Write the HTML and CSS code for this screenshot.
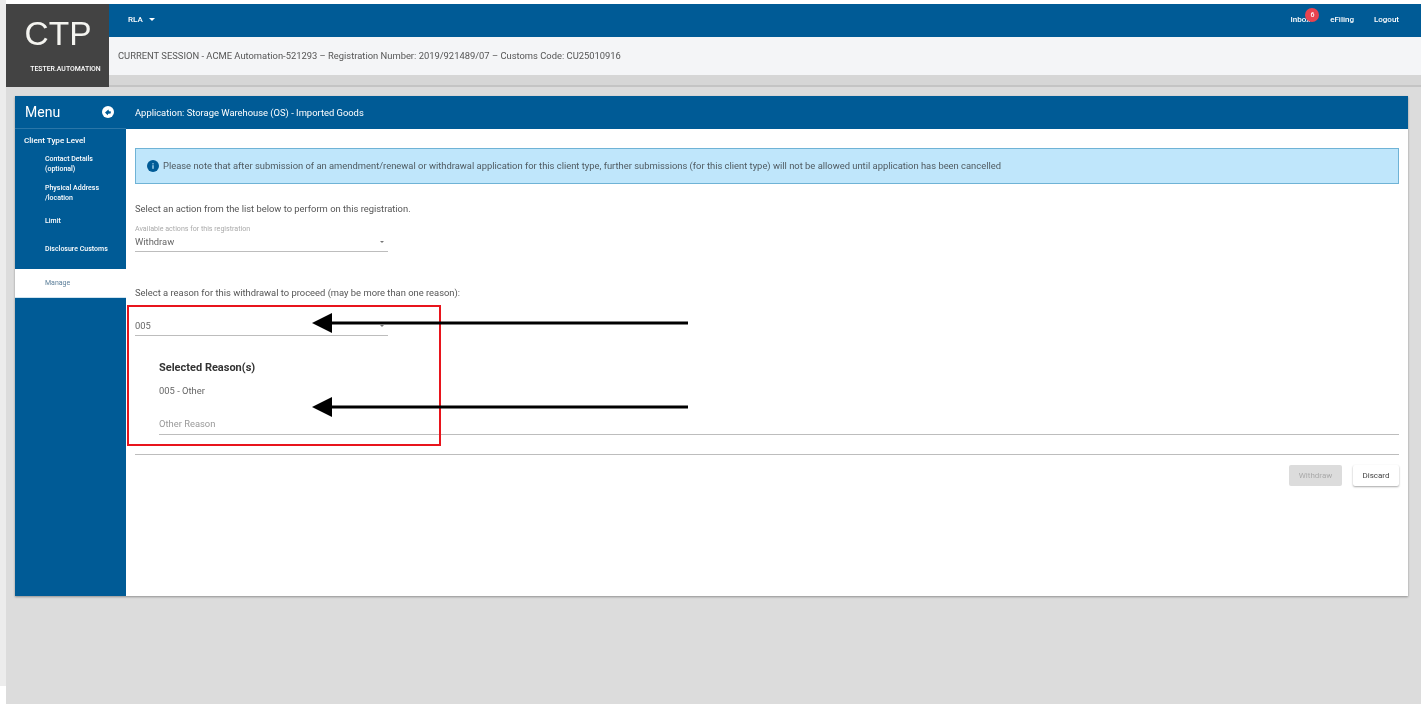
FILE: index.html
```html
<!DOCTYPE html>
<html lang="en">
<head>
<meta charset="utf-8">
<title>CTP</title>
<link rel="stylesheet" href="styles.css">
</head>
<body>
<div class="app">
  <header class="header">
    <div class="logo">
      <div class="logo-title">CTP</div>
      <div class="logo-user">TESTER.AUTOMATION</div>
    </div>
    <div class="header-main">
      <div class="topbar">
        <div class="user">RLA <span class="caret"></span></div>
        <nav class="topnav">
          <a class="inbox">Inbox<span class="badge">6</span></a>
          <a>eFiling</a>
          <a>Logout</a>
        </nav>
      </div>
      <div class="session">CURRENT SESSION - ACME Automation-521293 – Registration Number: 2019/921489/07 – Customs Code: CU25010916</div>
      <div class="session-foot"></div>
    </div>
  </header>
  <main class="card">
    <aside class="sidebar">
      <div class="menu-head">
        <span class="menu-title">Menu</span>
        <svg class="menu-icon" viewBox="0 0 12 12" width="12" height="12"><circle cx="6" cy="6" r="6" fill="#fff"/><path d="M3 6.6 6.4 3.4l.6 1.8 2 .2-.4 2.2-2.4.2-.6 1.4z" fill="#005b96"/></svg>
      </div>
      <div class="menu-level">Client Type Level</div>
      <ul class="menu-list">
        <li class="item-contact">Contact Details<br>(optional)</li>
        <li class="item-address">Physical Address<br>/location</li>
        <li class="item-limit">Limit</li>
        <li class="item-disclosure">Disclosure Customs</li>
        <li class="item-manage">Manage</li>
      </ul>
    </aside>
    <section class="content">
      <div class="content-head">Application: Storage Warehouse (OS) - Imported Goods</div>
      <div class="content-body">
        <div class="notice">
          <svg class="notice-icon" viewBox="0 0 12 12" width="12" height="12"><circle cx="6" cy="6" r="6" fill="#005b96"/><rect x="5.4" y="5.2" width="1.2" height="3.6" fill="#bfe6fb"/><rect x="5.4" y="3.2" width="1.2" height="1.2" fill="#bfe6fb"/></svg>
          <span>Please note that after submission of an amendment/renewal or withdrawal application for this client type, further submissions (for this client type) will not be allowed until application has been cancelled</span>
        </div>
        <p class="prompt prompt-action">Select an action from the list below to perform on this registration.</p>
        <div class="select select-action">
          <div class="select-label">Available actions for this registration</div>
          <div class="select-value">Withdraw<span class="select-caret"></span></div>
        </div>
        <p class="prompt prompt-reason">Select a reason for this withdrawal to proceed (may be more than one reason):</p>
        <div class="select select-reason">
          <div class="select-value">005<span class="select-caret"></span></div>
        </div>
        <div class="reasons">
          <h3>Selected Reason(s)</h3>
          <div class="reason-item">005 - Other</div>
          <div class="reason-input">Other Reason</div>
        </div>
        <hr class="divider">
        <div class="actions">
          <button class="btn btn-disabled" type="button">Withdraw</button>
          <button class="btn btn-plain" type="button">Discard</button>
        </div>
      </div>
    </section>
  </main>
  <div class="annot-box"></div>
  <svg class="annot-arrow arrow-one" viewBox="0 0 376 20" width="376" height="20"><path d="M20 8.5H376v3H20z" fill="#000"/><path d="M0 10 20 0v20z" fill="#000"/></svg>
  <svg class="annot-arrow arrow-two" viewBox="0 0 376 20" width="376" height="20"><path d="M20 8.5H376v3H20z" fill="#000"/><path d="M0 10 20 0v20z" fill="#000"/></svg>
</div>
</body>
</html>
```

FILE: styles.css
```css
* { box-sizing: border-box; }
html, body { margin: 0; height: 100%; }
body {
  background: #fff;
  padding: 4px 0 4px 6px;
  overflow: hidden;
  font-family: Roboto, "Liberation Sans", sans-serif;
  color: #555;
  position: relative;
}
body::before {
  content: "";
  position: absolute;
  left: 0; top: 0;
  width: 6px; height: 686px;
  background: #ececec;
}
.app {
  position: relative;
  height: 700px;
  background: #dcdcdc;
  filter: blur(0.7px);
}
.header { display: flex; height: 83px; }
.logo {
  width: 103px;
  background: #434343;
  color: #fff;
  text-align: center;
  padding-top: 10px;
}
.logo-title { font-family: "Liberation Sans", sans-serif; font-size: 33.5px; line-height: 40px; color: #f4f4f0; padding-left: 1px; }
.logo-user { font-size: 6.9px; font-weight: 500; margin-top: 11px; line-height: 8px; padding-left: 16px; white-space: nowrap; }
.header-main { flex: 1; display: flex; flex-direction: column; }
.topbar {
  height: 33px;
  background: #005b96;
  color: #fff;
  display: flex;
  align-items: center;
  justify-content: space-between;
  padding: 0 22px 2px 19px;
  font-size: 8px;
  font-weight: 500;
}
.caret {
  display: inline-block;
  margin-left: 4px;
  vertical-align: middle;
  border: 3px solid transparent;
  border-top-color: #fff;
  border-bottom-width: 0;
}
.topnav { display: flex; gap: 20px; }
.inbox { position: relative; }
.badge {
  position: absolute;
  left: 15px; top: -7px;
  width: 14px; height: 14px;
  border-radius: 50%;
  background: #e9434f;
  color: #fff;
  font-size: 7px;
  line-height: 14px;
  text-align: center;
}
.session {
  height: 38px;
  background: #f4f5f7;
  display: flex;
  align-items: center;
  padding: 0 0 2px 9px;
  font-size: 9.4px;
  color: #555;
}
.session-foot { flex: 1; background: #d6d6d6; border-bottom: 2px solid #c4c4c4; }
.card {
  display: flex;
  height: 500px;
  margin: 9px 13px 0 9px;
  background: #fff;
  box-shadow: 0 1px 2px rgba(0,0,0,.35);
}
.sidebar { width: 111px; background: #005b96; color: #fff; display: flex; flex-direction: column; }
.menu-head {
  height: 33px;
  display: flex;
  align-items: center;
  justify-content: space-between;
  padding: 0 12px 0 10px;
  border-bottom: 1px solid #2a76a8;
}
.menu-title { font-size: 14px; }
.menu-level { font-size: 8.1px; font-weight: 500; padding: 6px 0 0 9px; line-height: 11px; }
.menu-list { list-style: none; margin: 0; padding: 0; font-size: 7px; font-weight: 500; line-height: 9.6px; flex: 1; }
.menu-list li { padding-left: 30px; }
.item-contact { margin-top: 9px; }
.item-address { margin-top: 10px; }
.item-limit { margin-top: 14px; }
.item-disclosure { margin-top: 18px; }
.menu-list .item-manage {
  margin-top: 14px;
  height: 29px;
  padding-top: 2px;
  background: #fff;
  color: #5c7f9a;
  font-weight: 400;
  display: flex;
  align-items: center;
  border-bottom: 1px solid #cfe3ef;
}
.content { flex: 1; display: flex; flex-direction: column; min-width: 0; }
.content-head {
  height: 33px;
  background: #005b96;
  color: #fff;
  display: flex;
  align-items: center;
  padding-left: 9px;
  font-size: 9.4px;
}
.content-body { padding: 19px 9px 0 9px; }
.notice {
  height: 36px;
  background: #bfe6fb;
  border: 1px solid #6fb3d6;
  display: flex;
  align-items: center;
  gap: 4px;
  padding: 0 0 1px 11px;
  font-size: 9.4px;
  color: #4f5a60;
}
.prompt { margin: 0; font-size: 9.4px; line-height: 12px; color: #555; }
.prompt-action { margin-top: 19px; }
.select { width: 253px; border-bottom: 1px solid #bdbdbd; }
.select-action { margin-top: 10px; height: 27px; }
.select-label { font-size: 7.1px; line-height: 8px; color: #aaa; }
.select-value { position: relative; font-size: 9.4px; line-height: 11px; color: #666; margin-top: 3px; }
.select-caret {
  position: absolute;
  right: 4px; top: 5px;
  border: 2.5px solid transparent;
  border-top-color: #777;
  border-bottom-width: 0;
}
.prompt-reason { margin-top: 35px; }
.select-reason { margin-top: 21px; height: 16px; }
.select-reason .select-value { margin-top: 0; }
.reasons { padding-left: 24px; }
.reasons h3 { margin: 25px 0 0; font-size: 11px; line-height: 13px; font-weight: 700; color: #333; }
.reason-item { margin-top: 11px; font-size: 9.4px; line-height: 12px; color: #666; }
.reason-input { margin-top: 21px; font-size: 9.4px; height: 17px; line-height: 12px; color: #999; border-bottom: 1px solid #bdbdbd; }
.divider { margin: 19px 0 0; border: 0; border-top: 1px solid #bdbdbd; }
.actions { display: flex; justify-content: flex-end; gap: 11px; margin-top: 10px; }
.btn { height: 21px; border: 0; border-radius: 2px; font-family: inherit; font-size: 8px; padding: 0; }
.btn-disabled { width: 53px; background: #dcdcdc; color: #aaa; }
.btn-plain { width: 46px; background: #fff; color: #444; box-shadow: 0 1px 2px rgba(0,0,0,.35); }
.annot-box {
  position: absolute;
  left: 121px; top: 301px;
  width: 314px; height: 141px;
  border: 2px solid #e8141c;
}
.annot-arrow { position: absolute; left: 306px; }
.arrow-one { top: 309px; }
.arrow-two { top: 393px; }
```
